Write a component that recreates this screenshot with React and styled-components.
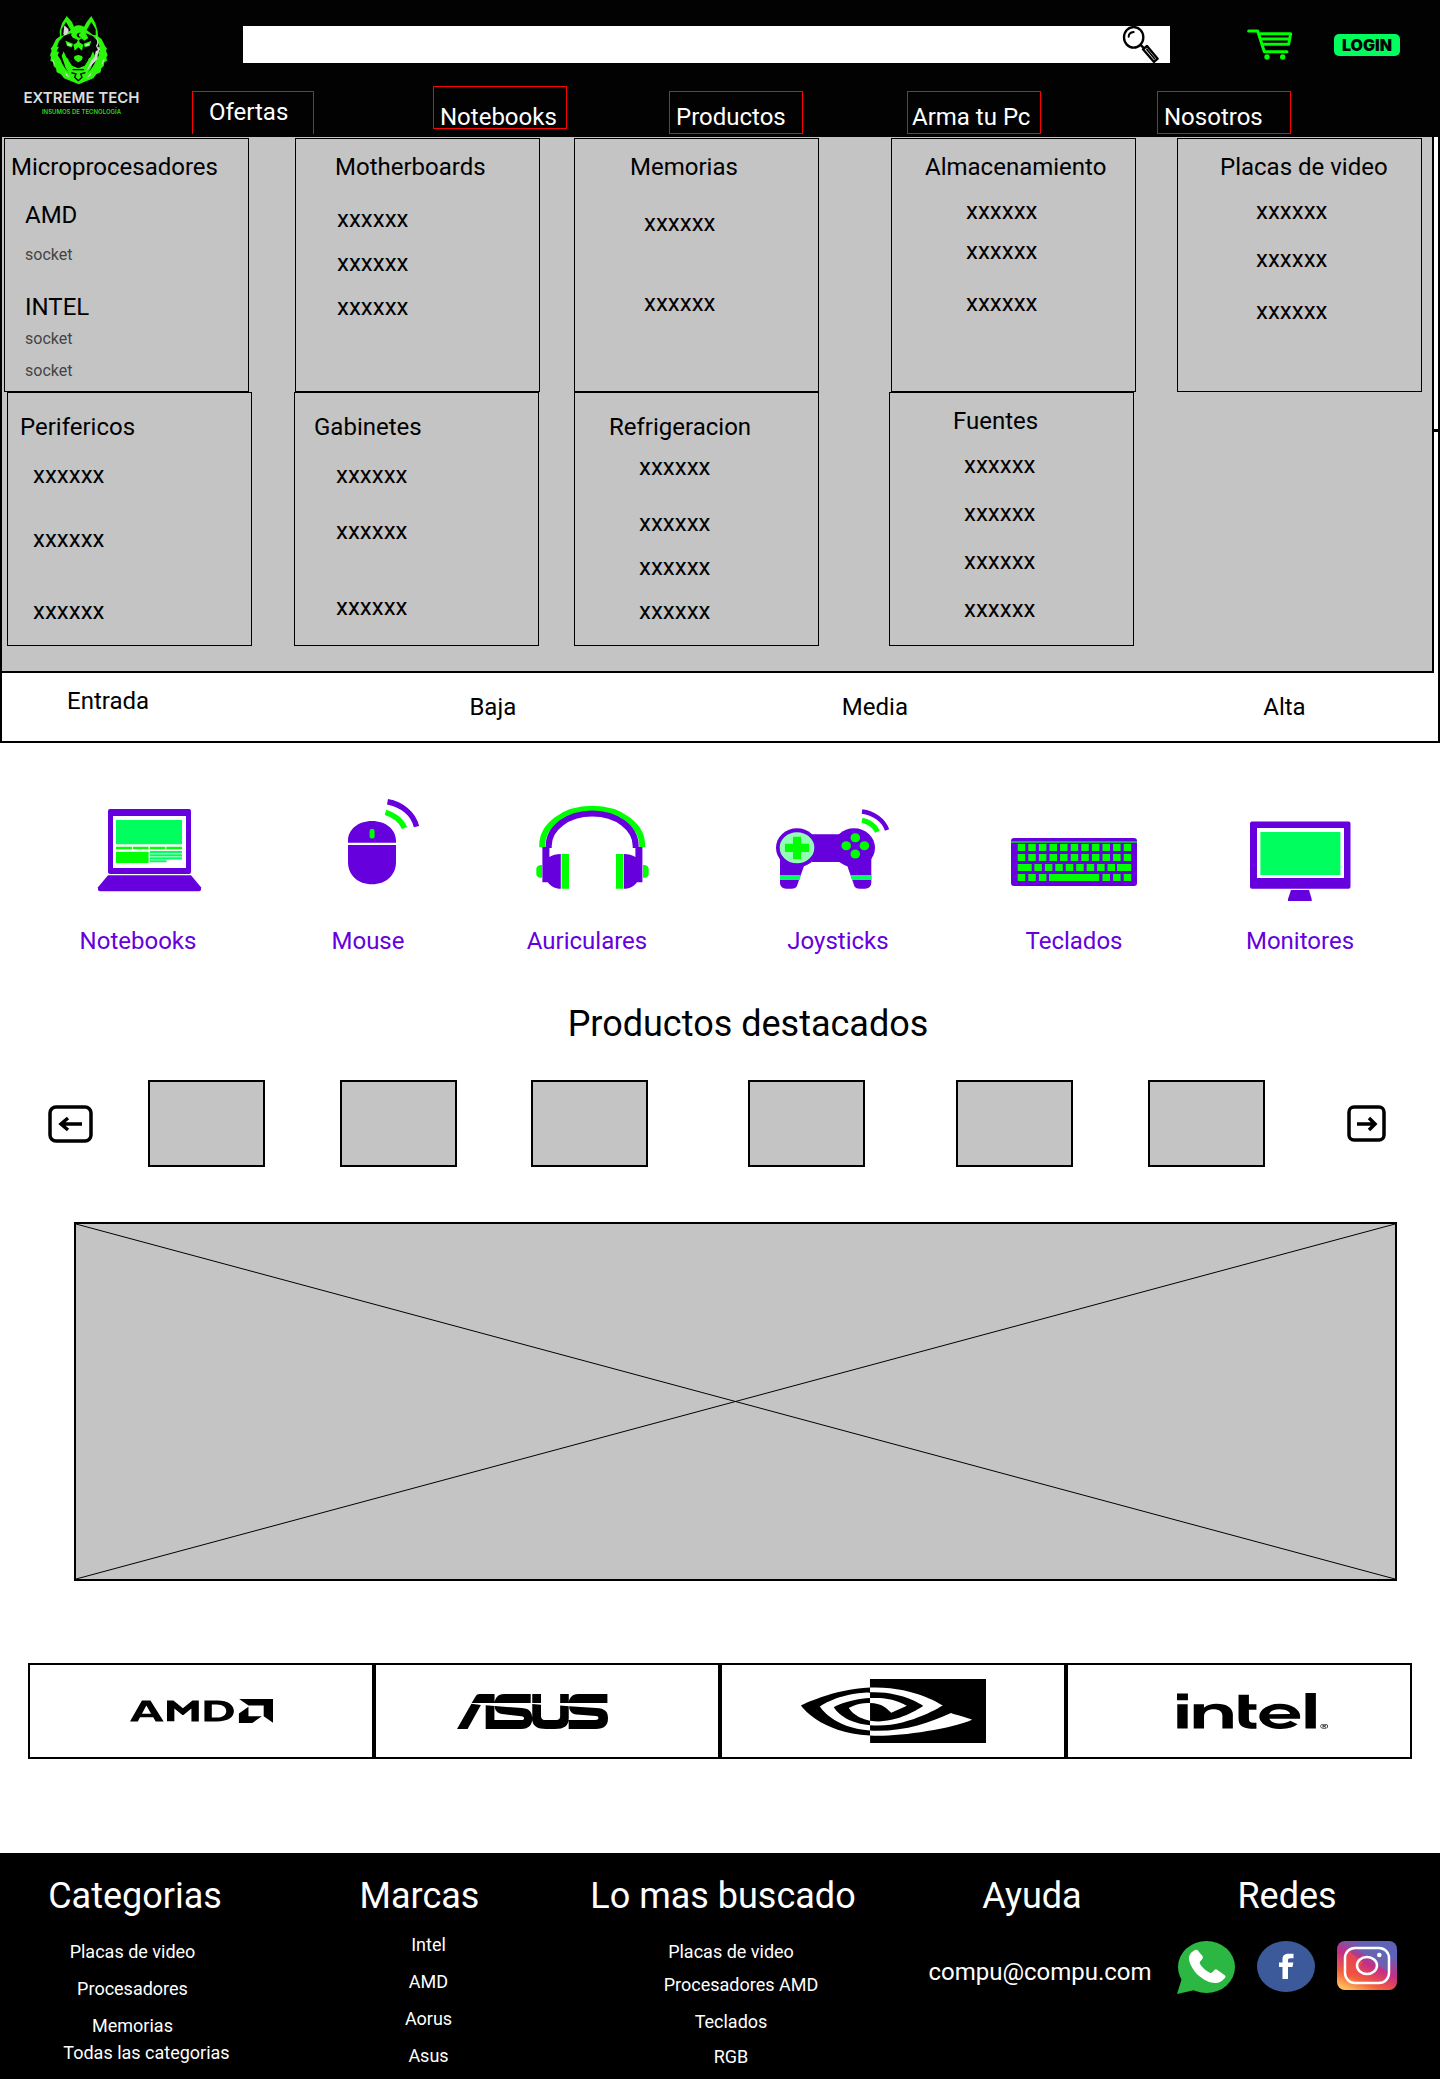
import React from "react";
import styled, { createGlobalStyle } from "styled-components";
import { SiAmd, SiAsus, SiNvidia, SiIntel } from "react-icons/si";

const PURPLE = "#6600dd";
const LIME = "#00ff00";
const MINT = "#00ff5e";
const GREY = "#c4c4c4";

const GlobalStyle = createGlobalStyle`
  *, *::before, *::after { box-sizing: border-box; }
  body {
    margin: 0;
    background: #fff;
    color: #000;
    font-family: Roboto, "Liberation Sans", sans-serif;
    font-size: 24px;
    line-height: 28px;
  }
  a { color: inherit; text-decoration: none; }
  h1, h2, h3, p, ul { margin: 0; padding: 0; font-weight: 400; }
  h1, h2, h3 { font-size: inherit; }
  ul { list-style: none; }
  button { padding: 0; border: 0; background: none; font: inherit; color: inherit; cursor: pointer; }
  svg { display: block; }
`;

/* ---------- header ---------- */

const Header = styled.header`
  display: grid;
  grid-template-columns: 154px 1fr;
  background: #020202;
  color: #fff;
`;

const Logo = styled.a`
  display: flex;
  flex-direction: column;
  align-items: center;
  padding: 15px 0 0 9px;
  color: #dcdcdc;
  font-family: Inter, sans-serif;
  font-weight: 600;
`;

const LogoName = styled.span`
  margin-top: 3px;
  font-size: 15px;
  line-height: 20px;
  white-space: nowrap;
`;

const LogoTagline = styled.span`
  color: #2bd81a;
  font-size: 6px;
  line-height: 8px;
  white-space: nowrap;
`;

const HeaderBody = styled.div`
  display: flex;
  flex-direction: column;
  gap: 23px;
  padding: 26px 0 3px;
`;

const TopRow = styled.div`
  display: flex;
  align-items: center;
  padding: 0 40px 0 89px;
`;

const SearchForm = styled.form`
  display: flex;
  flex: 1;
  height: 37px;
  padding-right: 10px;
  background: #fff;
`;

const SearchInput = styled.input`
  flex: 1;
  min-width: 0;
  padding: 0 12px;
  border: 0;
  outline: 0;
  background: transparent;
  font: inherit;
`;

const CartLink = styled.a`
  margin: 0 41px 0 77px;
`;

const LoginButton = styled.button`
  width: 66px;
  height: 22px;
  border-radius: 5px;
  background: ${MINT};
  color: #020202;
  font-family: Inter, sans-serif;
  font-size: 16px;
  font-weight: 900;
  line-height: 22px;
`;

const Nav = styled.nav`
  display: grid;
  grid-template-columns: 241fr 236fr 238fr 250fr 283fr;
  height: 48px;
  padding-left: 38px;
`;

const NavLink = styled.a`
  align-self: ${(p) => p.$align};
  width: ${(p) => (p.$open ? 122 : 134)}px;
  height: 43px;
  padding: ${(p) => p.$padding};
  border: 1px solid #f00;
  ${(p) => p.$open && "border-bottom: 0;"}
  white-space: nowrap;
`;

/* ---------- mega menu ---------- */

const MenuFrame = styled.section`
  border: 2px solid #000;
  border-top: 0;
`;

const MenuTop = styled.div`
  display: grid;
  grid-template-columns: 1fr 4px;
`;

const MegaMenu = styled.div`
  padding: 1px 0 25px;
  border: solid #000;
  border-width: 0 2px 2px 0;
  background: ${GREY};
`;

const MenuEdge = styled.div`
  height: 295px;
  border-bottom: 3px solid #000;
`;

const MenuRow = styled.div`
  display: grid;
  grid-template-columns: ${(p) => p.$columns};
  padding: ${(p) => p.$padding};
`;

const MenuCard = styled.section`
  grid-column: ${(p) => p.$column};
  min-height: 254px;
  padding-top: ${(p) => p.$top}px;
  border: 1px solid #000;
`;

const MenuTitle = styled.h3`
  padding-left: ${(p) => p.$inset}px;
  white-space: nowrap;
`;

const MenuList = styled.ul`
  padding-left: ${(p) => p.$inset}px;
`;

const MenuItem = styled.li`
  margin-top: ${(p) => p.$gap}px;
  ${(p) => p.$small && "color: #444; font-size: 16px; line-height: 20px;"}
`;

const Tiers = styled.nav`
  display: grid;
  grid-template-columns: 403fr 373fr 422fr 175fr;
  height: 68px;
  padding-left: 65px;
`;

const TierLink = styled.a`
  padding-top: ${(p) => p.$top}px;
`;

/* ---------- categories ---------- */

const Categories = styled.nav`
  display: grid;
  grid-template-columns: 256fr 204fr 234fr 268fr 204fr 248fr;
  padding: 56px 16px 0 10px;
  color: ${PURPLE};
`;

const Category = styled.a`
  display: flex;
  flex-direction: column;
  align-items: center;
  gap: 26px;
`;

/* ---------- featured products ---------- */

const FeaturedTitle = styled.h2`
  margin: 47px 0 34px;
  padding-left: 56px;
  font-size: 36px;
  line-height: 44px;
  text-align: center;
`;

const Carousel = styled.div`
  display: grid;
  grid-template-columns: 100fr 192fr 191fr 217fr 208fr 192fr 199fr 39fr;
  align-items: center;
  padding: 0 53px 0 48px;
`;

const Product = styled.a`
  width: 117px;
  height: 87px;
  border: 2px solid #000;
  background: ${GREY};
`;

const ArrowButton = styled.button`
  justify-self: start;
`;

const Banner = styled.section`
  height: 359px;
  margin: 55px 43px 82px 74px;
  border: 2px solid #000;
  background: ${GREY};

  svg {
    width: 100%;
    height: 100%;
  }
`;

const Brands = styled.ul`
  display: grid;
  grid-template-columns: repeat(4, 1fr);
  margin: 0 28px 94px;
`;

const Brand = styled.li`
  display: flex;
  align-items: center;
  justify-content: center;
  height: 96px;
  padding: ${(p) => p.$padding || 0};
  border: 2px solid #000;

  svg {
    width: ${(p) => p.$width}px;
    height: ${(p) => p.$height}px;
  }
`;

/* ---------- footer ---------- */

const Footer = styled.footer`
  display: grid;
  grid-template-columns: 270fr 299fr 308fr 310fr minmax(0, 200fr);
  padding: 21px 53px 13px 0;
  background: #000;
  color: #fff;
`;

const FooterColumn = styled.section`
  text-align: center;
`;

const FooterTitle = styled.h2`
  font-size: 36px;
  line-height: 44px;
  white-space: nowrap;
`;

const FooterList = styled.ul`
  padding: ${(p) => p.$padding};
  font-size: 18px;
  line-height: 21px;
`;

const FooterItem = styled.li`
  margin-top: ${(p) => p.$gap}px;
  padding-left: ${(p) => p.$indent || 0}px;
`;

const Mail = styled.p`
  margin-top: 40px;
  padding-left: 16px;
`;

const Socials = styled.div`
  display: flex;
  justify-content: center;
  gap: 22px;
  margin-top: 23px;

  svg { flex: none; }
`;

/* ---------- drawings ---------- */

const Wolf = () => (
  <svg width="68" height="70" viewBox="144 45 204 210" aria-hidden="true">
    <path fill="#2cf40c" d="M200 48l-14 22-7 24 1 15-12 9-10 20-6 8 3 6-5 14 3 6-2 10 8 5 2 12 7 6 2 12 13 6 9 12 20 8 24 10 24-10 20-8 9-12 13-6 2-12 7-6 2-12 8-5-2-10 4-6-5-14 3-6-6-8-10-20-11-9-1-15-7-24-12-22-14 18-8 14q-18-8-30 0l-6-14z" />
    <path fill="#020202" d="M198 66l-13 22-1 20 10-4 18-14zM274 66l13 22 0 18-9-2-18-14z" />
    <path fill="#d9d9d9" d="M193 76l-3 26 4 6 12-11-1-10z" />
    <path fill="#020202" d="M213 100l-22 8-14 16-6 16 6 0-7 14 7 2-4 10 8 12 6 14 10 16 12 12-6-14 4-4-12-32 20 12 0 8 20 14 20-14 0-8 20-12-12 32 4 4-6 14 12-12 10-16 6-14 8-12-4-10 7-2-7-14 6 0-6-16-14-16-22-8 8 14-12 8-9-8-8 8-12-8z" />
    <path fill="#2cf40c" d="M235 90l14 4 8 12-6 8-8 2-8-3-8 3-8-2-6-8 8-12z" />
    <path fill="#020202" d="M243 99c-14-4-18 12-5 14l5-2c-9 0-9-11 0-12z" />
    <path fill="#2cf40c" d="M235 118l5 10 10 6-4 18-11-10-11 10-4-18 10-6zM196 122l23 9-3 11-15-4zM274 122l-23 9 3 11 15-4z" />
    <path fill="#c9ffc4" d="M201 129l14 5-2 4-9-2zM269 129l-14 5 2 4 9-2z" />
    <path fill="#2cf40c" d="M235 166c15 0 15 9 9 15l-9 6-9-6c-6-6-6-15 9-15zM191 154l13 30 10 14 21 8 21-8 10-14 13-30 6 14-12 36-18 28-20 12-20-12-18-28-12-36z" />
    <path fill="#020202" d="M206 168l12 20 17 7 17-7 12-20 1 12-11 17-19 8-19-8-11-17z" />
    <path fill="#2cf40c" d="M223 171l12-6 12 6-3 9-9 6-9-6z" />
    <path fill="#d9d9d9" d="M288 106l8 22-4 12 8 8-6 12-2 18-14 14-18 20 14-30 10-12 3-16 7-4-6-12 4-10zM156 176l6 16 3 4-4-16zM314 176l-6 16-3 4 4-16zM196 216l14 18-12-8zM274 216l-14 18 12-8z" />
    <path fill="none" stroke="#020202" strokeWidth="4" d="M214 218l14 4-4 10 11 10 11-10-4-10 14-4M218 209h34" />
  </svg>
);

const Magnifier = () => (
  <svg width="38" height="37" viewBox="486 78 114 111" fill="none" stroke="#000" aria-hidden="true">
    <ellipse cx="521" cy="112" rx="29" ry="31" strokeWidth="7" />
    <path d="M506 110c0-8 6-13 15-14" strokeWidth="6" strokeLinecap="round" />
    <path d="M541 134l12 12" strokeWidth="7" />
    <path d="M549 148l12-10 32 38-11 10z" strokeWidth="7" strokeLinejoin="round" />
    <path d="M559 146l26 32" strokeWidth="5" />
  </svg>
);

const Cart = () => (
  <svg width="46" height="31" viewBox="860 89 138 93" fill="none" stroke={LIME} strokeLinecap="round" strokeLinejoin="round" aria-hidden="true">
    <path d="M865 95h27l20 62h68" strokeWidth="9" />
    <path d="M900 103h91l-6 32h-77M902 119h84" strokeWidth="9" />
    <circle cx="920" cy="173" r="8" fill={LIME} stroke="none" />
    <circle cx="967" cy="173" r="8" fill={LIME} stroke="none" />
  </svg>
);

const IconCanvas = ({ x, children }) => (
  <svg width="140" height="102" viewBox={`${x} 799 140 102`} fill={PURPLE} aria-hidden="true">
    {children}
  </svg>
);

const NotebookIcon = () => (
  <IconCanvas x={68}>
    <path fillRule="evenodd" d="M110 809h79q2 0 2 2v61q0 2-2 2h-79q-2 0-2-2v-61q0-2 2-2zM113 816v52h73v-52z" />
    <path d="M108 875.3h83l10 12v2q0 2-2 2h-99q-2 0-2-2v-2z" />
    <path fill={MINT} d="M116 820h66v24.3h-66zM149.800 851h32.200v2.300h-32.200zM149.800 854.200h32.200v2.200h-32.200zM149.800 857.300h32.200v2.200h-32.200zM149.800 860.300h16.700v2h-16.700z" />
    <path fill={LIME} d="M116 846.700h16v2.500h-16zM133 846.700h15.600v2.500h-15.600zM149.800 846.700h15.500v2.500h-15.500zM166.300 846.700h15.700v2.500h-15.700zM116 851.700h32.600v11.300h-32.600z" />
  </IconCanvas>
);

const MouseIcon = () => (
  <IconCanvas x={297}>
    <path d="M347 842.700v-2c0-11 10-19.700 24-19.700s24 8.700 24 19.700v2zM347 845h48v17c0 13-10 22.300-24 22.300s-24-9.300-24-22.300z" />
    <rect x="368.600" y="829" width="5" height="9.500" rx="2" fill={LIME} />
    <path fill="none" stroke={LIME} strokeWidth="5.500" d="M384.500 812.300c8 2.200 16 8 19 15.700" />
    <path fill="none" stroke={PURPLE} strokeWidth="5.500" d="M386.500 801.700c14 2.500 26 12 29 25" />
  </IconCanvas>
);

const HeadphonesIcon = () => (
  <IconCanvas x={517}>
    <path fill="none" stroke={LIME} strokeWidth="6" d="M542.200 847.300v-2c0-20 22-36.500 50-36.500s50 16.500 50 36.500v2" />
    <path fill="none" stroke={PURPLE} strokeWidth="6" d="M548.700 848v-2c0-18 19-32.500 43.500-32.500s43.500 14.500 43.500 32.500v2" />
    <path d="M542.400 847h7v10c3-2 7-3 11.400-3v34.700c-6 0-10-2.500-13-6.500h-5.400zM642.400 847h-7v10c-3-2-7-3-11.400-3v34.700c6 0 10-2.500 13-6.500h5.400z" />
    <path fill={LIME} d="M561.600 854h7.400v34.700h-7.400zM616 854h7.400v34.700h-7.400zM542 865v12.700h-2q-3.700-1-3.700-4v-4.700q0-3 3.700-4zM643 865v12.700h2q3.700-1 3.700-4v-4.700q0-3-3.700-4z" />
  </IconCanvas>
);

const JoystickIcon = () => (
  <IconCanvas x={768}>
    <ellipse cx="797" cy="847.700" rx="21" ry="19.500" />
    <ellipse cx="854" cy="847.700" rx="21" ry="19.500" />
    <path d="M808 834.300h34v27.700h-34zM780 855v28c0 3.500 3 5.700 6 5.700h6c4 0 5-2 6-5.700l6-17 8-4v-9zM871.300 855v28c0 3.500-3 5.700-6 5.700h-6c-4 0-5-2-6-5.700l-6-17-8-4v-9z" />
    <ellipse cx="797" cy="847.700" rx="17.300" ry="15.500" fill="#93ffb4" />
    <path fill={LIME} d="M793 836.700h8v7h8v8.300h-8v7h-8v-7h-8v-8.300h8z" />
    <g fill={LIME}>
      <ellipse cx="855.300" cy="837.700" rx="4.800" ry="4.500" />
      <ellipse cx="846.200" cy="845.700" rx="4.800" ry="4.500" />
      <ellipse cx="864.400" cy="845.700" rx="4.800" ry="4.500" />
      <ellipse cx="855.300" cy="854" rx="4.800" ry="4.500" />
    </g>
    <path fill={MINT} d="M780 875h21l-1.600 5h-19.400zM850.300 875h21v5h-19.300z" />
    <path fill="none" stroke={LIME} strokeWidth="5" d="M862 820.300c7 1.500 13 6 15.500 11.400" />
    <path fill="none" stroke={PURPLE} strokeWidth="4.500" d="M862 811.500c12 1.500 22 9 25 18.500" />
  </IconCanvas>
);

const keys = (y, start, step, count, skip = []) =>
  Array.from({ length: count }, (_, i) => i)
    .filter((i) => !skip.includes(i))
    .map((i) => <rect key={`${y}-${i}`} x={start + step * i} y={y} width="7.500" height="7" />);

const KeyboardIcon = () => (
  <IconCanvas x={1003}>
    <rect x="1010" y="838" width="126" height="48" rx="3" />
    <rect x="1010" y="841" width="126" height="2" fill="#1aa857" />
    <g fill={LIME}>
      {keys(844, 1016.7, 10.6, 11)}
      {keys(854, 1016.7, 10.6, 11)}
      {keys(864, 1033.4, 10.45, 8)}
      {keys(874, 1016.7, 10.6, 11, [3, 4, 5, 6, 7])}
      <rect x="1016.700" y="864" width="14" height="7" />
      <rect x="1116" y="864" width="14.200" height="7" />
      <rect x="1048" y="874" width="50.200" height="7" />
    </g>
  </IconCanvas>
);

const MonitorIcon = () => (
  <IconCanvas x={1229}>
    <path fillRule="evenodd" d="M1251 821.500h96.500q2 0 2 2v63.200q0 2-2 2h-96.500q-2 0-2-2v-63.200q0-2 2-2zM1256 828v50h87v-50z" />
    <path fill={MINT} d="M1259.400 832h80v43h-80z" />
    <path d="M1290 890h18l2.700 9v2h-23.700v-2z" />
  </IconCanvas>
);

const ArrowLeft = () => (
  <svg width="46" height="38" viewBox="0 0 46 38" fill="none" stroke="#000" strokeWidth="3.500" aria-hidden="true">
    <rect x="2" y="2" width="41" height="34" rx="6" />
    <path d="M34 19h-20M20 13l-7 6 7 6" />
  </svg>
);

const ArrowRight = () => (
  <svg width="40" height="37" viewBox="0 0 40 37" fill="none" stroke="#000" strokeWidth="3.500" aria-hidden="true">
    <rect x="2" y="2" width="35" height="33" rx="5" />
    <path d="M10 19h18M22 13l6 6-6 6" />
  </svg>
);

const WhatsApp = () => (
  <svg width="58" height="53" viewBox="0 0 58 53" aria-hidden="true">
    <ellipse cx="29.500" cy="26" rx="28.500" ry="26" fill="#2cb742" />
    <path fill="#2cb742" d="M0 53l5-16 13 12z" />
    <path fill="#fff" d="M18 9c2-.5 3 .5 4 2l3.500 4c1 1.500 0 3-1.500 4.500-1.500 1.500-1.500 2.500-1 3.500 2.500 4 6 7 10.400 9 1.500 0 3-1.500 4-3 1-1 2-1 3 0l7 5c1.500 1 1.500 2 .5 3-3 3.500-6 5-9 5-4 0-8-1-12-3.500-5.500-3.500-9-7-11.500-11.500-2-3.500-3.500-7-3.500-9.500 0-4 3-7 6.100-8.500z" />
  </svg>
);

const Facebook = () => (
  <svg width="58" height="51" viewBox="0 0 58 51" aria-hidden="true">
    <ellipse cx="29" cy="25.500" rx="29" ry="25.500" fill="#3c5a99" />
    <path fill="#fff" d="M25.500 38v-12h-3.500v-4.500h3.500v-3.500c0-3.500 2.500-5.300 6-5.300h5v4.600h-3c-2 0-2.500.7-2.500 2.200v2h5.300l-.8 4.500h-4.500v12z" />
  </svg>
);

const Instagram = () => (
  <svg width="60" height="49" viewBox="0 0 60 49" aria-hidden="true">
    <defs>
      <linearGradient id="ig-base" x1="0.150" y1="1" x2="0.700" y2="0">
        <stop offset="0" stopColor="#ffc45f" />
        <stop offset="0.250" stopColor="#f5603a" />
        <stop offset="0.550" stopColor="#c72e84" />
        <stop offset="0.850" stopColor="#5f63b8" />
      </linearGradient>
    </defs>
    <rect width="60" height="49" rx="8" fill="url(#ig-base)" />
    <path fill="#5c6bb8" opacity="0.700" d="M20 8h30l2 24z" />
    <path fill="#f4503f" opacity="0.700" d="M9 8l17 13-7 10-11 9z" />
    <g fill="none" stroke="#fff" strokeWidth="2.500">
      <rect x="8" y="7" width="44" height="35" rx="10" />
      <ellipse cx="30" cy="24.500" rx="10" ry="8.500" />
    </g>
    <circle cx="42.300" cy="14" r="2.300" fill="#fff" />
  </svg>
);

/* ---------- content ---------- */

const navLinks = [
  { label: "Ofertas", align: "end", open: true, padding: "6px 0 0 16px" },
  { label: "Notebooks", align: "start", padding: "16px 0 0 6px" },
  { label: "Productos", align: "end", padding: "11px 0 0 6px" },
  { label: "Arma tu Pc", align: "end", padding: "11px 0 0 4px" },
  { label: "Nosotros", align: "end", padding: "11px 0 0 6px" },
];

const X = "xxxxxx";

const menuRows = [
  {
    columns: "245fr 46fr 245fr 34fr 245fr 72fr 245fr 41fr 245fr",
    padding: "0 10px 0 2px",
    cards: [
      {
        title: "Microprocesadores", top: 14, titleInset: 6, listInset: 20,
        items: [["AMD", 20], ["socket", 16, true], ["INTEL", 28], ["socket", 8, true], ["socket", 12, true]],
      },
      { title: "Motherboards", top: 14, titleInset: 39, listInset: 41, items: [[X, 24], [X, 16], [X, 16]] },
      { title: "Memorias", top: 14, titleInset: 55, listInset: 69, items: [[X, 28], [X, 52]] },
      { title: "Almacenamiento", top: 14, titleInset: 33, listInset: 74, items: [[X, 16], [X, 12], [X, 24]] },
      { title: "Placas de video", top: 14, titleInset: 42, listInset: 78, items: [[X, 16], [X, 20], [X, 24]] },
    ],
  },
  {
    columns: "245fr 42fr 245fr 35fr 245fr 70fr 245fr 298fr",
    padding: "0 0 0 5px",
    cards: [
      { title: "Perifericos", top: 20, titleInset: 12, listInset: 25, items: [[X, 20], [X, 36], [X, 44]] },
      { title: "Gabinetes", top: 20, titleInset: 19, listInset: 41, items: [[X, 20], [X, 28], [X, 48]] },
      { title: "Refrigeracion", top: 20, titleInset: 34, listInset: 64, items: [[X, 12], [X, 28], [X, 16], [X, 16]] },
      { title: "Fuentes", top: 14, titleInset: 63, listInset: 74, items: [[X, 16], [X, 20], [X, 20], [X, 20]] },
    ],
  },
];

const tiers = [["Entrada", 14], ["Baja", 20], ["Media", 20], ["Alta", 20]];

const categories = [
  ["Notebooks", NotebookIcon],
  ["Mouse", MouseIcon],
  ["Auriculares", HeadphonesIcon],
  ["Joysticks", JoystickIcon],
  ["Teclados", KeyboardIcon],
  ["Monitores", MonitorIcon],
];

const brands = [
  { name: "AMD", Icon: SiAmd, box: "0 9.137 24 5.726", width: 143, height: 24 },
  { name: "ASUS", Icon: SiAsus, box: "0 9.522 24 4.956", width: 151, height: 35, padding: "0 30px 0 0" },
  { name: "NVIDIA", Icon: SiNvidia, box: "0 4.063 24 15.874", width: 185, height: 64 },
  { name: "Intel", Icon: SiIntel, box: "0 7.345 24 9.310", width: 151, height: 36, padding: "0 0 0 26px" },
];

const footerLists = [
  {
    title: "Categorias", padding: "0 5px 0 0",
    items: [["Placas de video", 23], ["Procesadores", 16], ["Memorias", 16], ["Todas las categorias", 6, 28]],
  },
  { title: "Marcas", padding: "0 0 0 18px", items: [["Intel", 16], ["AMD", 16], ["Aorus", 16], ["Asus", 16]] },
  {
    title: "Lo mas buscado", padding: "0 0 0 16px",
    items: [["Placas de video", 23], ["Procesadores AMD", 12, 20], ["Teclados", 16], ["RGB", 14]],
  },
];

export default function App() {
  return (
    <>
      <GlobalStyle />
      <Header>
        <Logo href="#">
          <Wolf />
          <LogoName>EXTREME TECH</LogoName>
          <LogoTagline>INSUMOS DE TECNOLOGÍA</LogoTagline>
        </Logo>
        <HeaderBody>
          <TopRow>
            <SearchForm role="search" onSubmit={(e) => e.preventDefault()}>
              <SearchInput type="search" aria-label="Buscar" />
              <button type="submit" aria-label="Buscar"><Magnifier /></button>
            </SearchForm>
            <CartLink href="#" aria-label="Carrito"><Cart /></CartLink>
            <LoginButton type="button">LOGIN</LoginButton>
          </TopRow>
          <Nav>
            {navLinks.map((l) => (
              <NavLink key={l.label} href="#" $align={l.align} $open={l.open} $padding={l.padding}>
                {l.label}
              </NavLink>
            ))}
          </Nav>
        </HeaderBody>
      </Header>

      <main>
        <MenuFrame>
          <MenuTop>
            <MegaMenu>
              {menuRows.map((row) => (
                <MenuRow key={row.columns} $columns={row.columns} $padding={row.padding}>
                  {row.cards.map((card, i) => (
                    <MenuCard key={card.title} $column={i * 2 + 1} $top={card.top}>
                      <MenuTitle $inset={card.titleInset}>{card.title}</MenuTitle>
                      <MenuList $inset={card.listInset}>
                        {card.items.map(([label, gap, small], j) => (
                          <MenuItem key={j} $gap={gap} $small={small}>
                            <a href="#">{label}</a>
                          </MenuItem>
                        ))}
                      </MenuList>
                    </MenuCard>
                  ))}
                </MenuRow>
              ))}
            </MegaMenu>
            <MenuEdge />
          </MenuTop>
          <Tiers>
            {tiers.map(([label, top]) => (
              <TierLink key={label} href="#" $top={top}>{label}</TierLink>
            ))}
          </Tiers>
        </MenuFrame>

        <Categories>
          {categories.map(([label, Icon]) => (
            <Category key={label} href="#">
              <Icon />
              <span>{label}</span>
            </Category>
          ))}
        </Categories>

        <FeaturedTitle>Productos destacados</FeaturedTitle>
        <Carousel>
          <ArrowButton type="button" aria-label="Anterior"><ArrowLeft /></ArrowButton>
          {[1, 2, 3, 4, 5, 6].map((n) => (
            <Product key={n} href="#" aria-label={`Producto ${n}`} />
          ))}
          <ArrowButton type="button" aria-label="Siguiente"><ArrowRight /></ArrowButton>
        </Carousel>

        <Banner>
          <svg viewBox="0 0 100 100" preserveAspectRatio="none" stroke="#000" aria-hidden="true">
            <path d="M0 0L100 100M0 100L100 0" vectorEffect="non-scaling-stroke" />
          </svg>
        </Banner>

        <Brands>
          {brands.map(({ name, Icon, box, width, height, padding }) => (
            <Brand key={name} $width={width} $height={height} $padding={padding}>
              <Icon viewBox={box} preserveAspectRatio="none" role="img" aria-label={name} />
            </Brand>
          ))}
        </Brands>
      </main>

      <Footer>
        {footerLists.map((list) => (
          <FooterColumn key={list.title}>
            <FooterTitle>{list.title}</FooterTitle>
            <FooterList $padding={list.padding}>
              {list.items.map(([label, gap, indent]) => (
                <FooterItem key={label} $gap={gap} $indent={indent}>
                  <a href="#">{label}</a>
                </FooterItem>
              ))}
            </FooterList>
          </FooterColumn>
        ))}
        <FooterColumn>
          <FooterTitle>Ayuda</FooterTitle>
          <Mail><a href="mailto:compu@compu.com">compu@compu.com</a></Mail>
        </FooterColumn>
        <FooterColumn>
          <FooterTitle>Redes</FooterTitle>
          <Socials>
            <a href="#" aria-label="WhatsApp"><WhatsApp /></a>
            <a href="#" aria-label="Facebook"><Facebook /></a>
            <a href="#" aria-label="Instagram"><Instagram /></a>
          </Socials>
        </FooterColumn>
      </Footer>
    </>
  );
}
